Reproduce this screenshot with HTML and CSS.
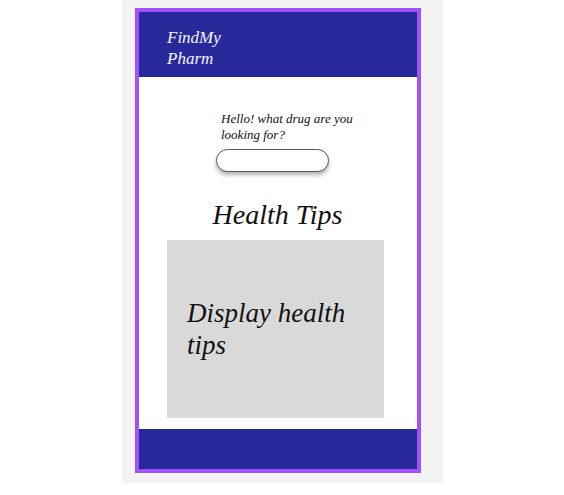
FILE: index.html
```html
<!DOCTYPE html>
<html lang="en">
<head>
    <meta charset="UTF-8">
    <meta name="viewport" content="width=device-width, initial-scale=1.0">
    <title>FindMy Pharm</title>
    <link rel="stylesheet" href="styles.css">
</head>
<body>
    <div class="canvas">
        <div class="phone">
            <div class="topBar">
                <p class="logo">FindMy Pharm</p>
            </div>
            <div class="content">
                <div class="search">
                    <label for="drug">Hello! what drug are you looking for?</label>
                    <input type="text" id="drug">
                </div>
                <h1>Health Tips</h1>
                <div class="tips">
                    <p>Display health tips</p>
                </div>
            </div>
            <div class="bottomBar"></div>
        </div>
    </div>
</body>
</html>
```

FILE: styles.css
```css
body
{
    margin: 0;
    background: #fff;
    font-family: "Liberation Serif", "DejaVu Serif", serif;
    font-style: italic;
}
.canvas
{
    margin-left: 122px;
    width: 321px;
    height: 483px;
    box-sizing: border-box;
    padding: 8px 22px 10px 13px;
    background: #f3f3f3;
}
.phone
{
    height: 100%;
    box-sizing: border-box;
    border: 4px solid #a252fd;
    background: #fff;
    display: flex;
    flex-direction: column;
}
.topBar
{
    height: 65px;
    flex-shrink: 0;
    background: #27299b;
    padding: 15px 0 0 28px;
    box-sizing: border-box;
}
.logo
{
    margin: 0;
    width: 70px;
    color: #f4f4ff;
    font-size: 17px;
    line-height: 21px;
}
.content
{
    flex: 1;
    display: flex;
    flex-direction: column;
    padding-top: 34px;
}
.search
{
    display: flex;
    flex-direction: column;
    gap: 6px;
    padding-left: 77px;
}
.search label
{
    width: 145px;
    margin-left: 5px;
    font-size: 13px;
    line-height: 16px;
    color: #111;
}
.search input
{
    width: 113px;
    height: 23px;
    box-sizing: border-box;
    border: 1px solid #555;
    border-radius: 12px;
    box-shadow: 0 3px 4px rgba(0, 0, 0, 0.3);
    outline: none;
}
.content h1
{
    margin: 28px 0 10px;
    text-align: center;
    font-weight: normal;
    font-size: 28px;
    line-height: 30px;
    color: #111;
    padding-right: 1px;
}
.tips
{
    margin-left: 28px;
    width: 217px;
    height: 178px;
    background: #d9d9d9;
    display: flex;
    align-items: center;
    padding-left: 20px;
    box-sizing: border-box;
}
.tips p
{
    margin: 0;
    font-size: 27px;
    line-height: 32px;
    width: 170px;
    color: #111;
}
.bottomBar
{
    height: 40px;
    flex-shrink: 0;
    background: #27299b;
}
```
